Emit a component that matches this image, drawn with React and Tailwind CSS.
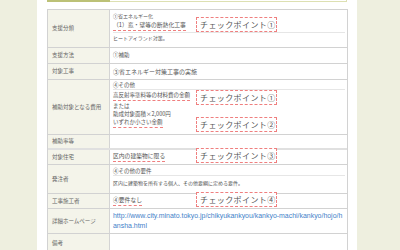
import React from "react";

const jp = { fontFamily: '"Noto Sans CJK JP", "Noto Sans", sans-serif' };

function Label({ children }) {
  return (
    <div className="w-[62px] shrink-0 bg-[#f4f4ea] border-r border-[#d4d4d4] flex items-center pl-[4px] text-[5.5px] text-[#666]">
      {children}
    </div>
  );
}

function Under({ children }) {
  return (
    <span className="inline-block border-b-[1.5px] border-dashed border-[#ef7f7f] leading-[8px] pb-[1px]">
      {children}
    </span>
  );
}

function Sep() {
  return <div className="h-px bg-[#e6e6e6] mr-[2px]" />;
}

function Check({ className, n }) {
  return (
    <div
      className={
        "absolute left-[148px] w-[81px] h-[15px] border-[1.5px] border-dashed border-[#ef7f7f] bg-white flex items-center pl-[3px] text-[8px] tracking-[0.4px] text-[#555] " +
        className
      }
    >
      チェックポイント{n}
    </div>
  );
}

export default function App() {
  return (
    <div
      className="w-[400px] h-[250px] overflow-hidden bg-[#eeefdf] flex"
      style={jp}
    >
      <div className="w-[37px] shrink-0" />
      <div className="w-[320px] shrink-0 bg-white pl-[10px]">
        {/* top box bottom edge */}
        <div className="w-[300px] h-[3px] flex">
          <div className="w-[63px] h-[2px] bg-[#bcc177]" />
          <div className="flex-1 h-[2px] border-b border-r border-[#dde0b2]" />
        </div>
        <div className="mt-[6px] w-[301px] border border-[#d2d2d2] relative text-[#555]">
          {/* row 1 */}
          <div className="flex h-[37px]">
            <Label>支援分類</Label>
            <div className="flex-1 pl-[3px] flex flex-col text-[5.5px]">
              <div className="h-[8px] leading-[8px] mt-[2px] text-[5px]">①省エネルギー化</div>
              <div className="h-[11px] mt-px text-[5.8px]">
                <Under>（1）窓・壁等の断熱化工事</Under>
              </div>
              <Sep />
              <div className="h-[8px] leading-[8px] mt-px text-[5px]">ヒートアイランド対策。</div>
            </div>
          </div>
          {/* row 2 */}
          <div className="flex h-[16px] border-t border-[#d2d2d2]">
            <Label>支援方法</Label>
            <div className="flex-1 pl-[3px] flex items-center text-[5.5px]">①補助</div>
          </div>
          {/* row 3 */}
          <div className="flex h-[16px] border-t border-[#d2d2d2]">
            <Label>対象工事</Label>
            <div className="flex-1 pl-[3px] flex items-center text-[6px]">③省エネルギー対策工事の実施</div>
          </div>
          {/* row 4 */}
          <div className="flex h-[55px] border-t border-[#d2d2d2]">
            <Label>補助対象となる費用</Label>
            <div className="flex-1 pl-[3px] flex flex-col text-[5.5px]">
              <div className="h-[8px] leading-[8px] mt-px">④その他</div>
              <Sep />
              <div className="h-[11px] mt-px">
                <Under>高反射率塗料等の材料費の金額</Under>
              </div>
              <div className="h-[8px] leading-[8px]">または</div>
              <div className="h-[8px] leading-[8px]">助成対象面積×2,000円</div>
              <div className="h-[11px]">
                <Under>いずれか小さい金額</Under>
              </div>
            </div>
          </div>
          {/* row 5 */}
          <div className="flex h-[14px] border-t border-[#d2d2d2]">
            <Label>補助率等</Label>
            <div className="flex-1" />
          </div>
          {/* row 6 */}
          <div className="flex h-[16px] border-t-2 border-[#e0e0e0]">
            <Label>対象住宅</Label>
            <div className="flex-1 pl-[3px] pt-[2px] text-[5.8px]">
              <Under>区内の建築物に限る</Under>
            </div>
          </div>
          {/* row 7 */}
          <div className="flex h-[29px] border-t border-[#d2d2d2]">
            <Label>発注者</Label>
            <div className="flex-1 pl-[3px] flex flex-col text-[5.5px]">
              <div className="h-[8px] leading-[8px] mt-[2px]">④その他の要件</div>
              <Sep />
              <div className="h-[9px] leading-[9px] mt-[2px] text-[5px]">
                区内に建築物を所有する個人、その他要綱に定める要件。
              </div>
            </div>
          </div>
          {/* row 8 */}
          <div className="flex h-[15px] border-t border-[#d2d2d2]">
            <Label>工事施工者</Label>
            <div className="flex-1 pl-[3px] pt-[2px] text-[5.8px]">
              <Under>④要件なし</Under>
            </div>
          </div>
          {/* row 9 */}
          <div className="flex h-[25px] border-t border-[#d2d2d2]">
            <Label>詳細ホームページ</Label>
            <div
              className="flex-1 pl-[3px] pr-[3px] pt-[2px] text-[6.95px] leading-[10px] text-[#3f7fc9] break-all"
              style={{ fontFamily: '"Liberation Sans", Arial, sans-serif' }}
            >
              http://www.city.minato.tokyo.jp/chikyukankyou/kankyo-machi/kankyo/hojo/hansha.html
            </div>
          </div>
          {/* row 10 */}
          <div className="flex h-[20px] border-t border-[#d2d2d2]">
            <Label>備考</Label>
            <div className="flex-1" />
          </div>

          <Check className="top-[7px]" n="①" />
          <Check className="top-[80px]" n="①" />
          <Check className="top-[107px]" n="②" />
          <Check className="top-[138px]" n="③" />
          <Check className="top-[182px]" n="④" />
        </div>
      </div>
      <div className="flex-1" />
    </div>
  );
}
